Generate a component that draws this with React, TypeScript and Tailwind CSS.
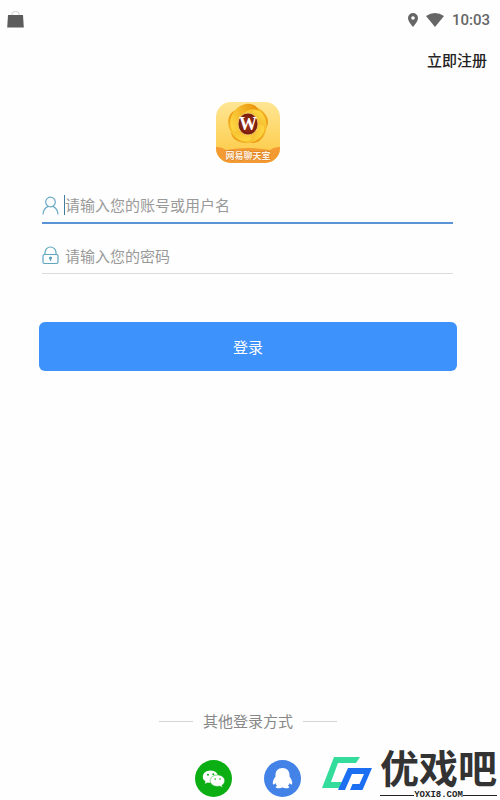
import { useState } from "react";
import type { ReactNode } from "react";

type FieldProps = {
  id: string;
  type: string;
  placeholder: string;
  icon: ReactNode;
  active?: boolean;
};

function Field({ id, type, placeholder, icon, active }: FieldProps) {
  const [value, setValue] = useState("");

  return (
    <div
      className={
        active
          ? "flex h-9 items-center border-b-2 border-[#5a93d6]"
          : "flex h-9 items-center border-b border-[#dcdcdc]"
      }
    >
      <label htmlFor={id} aria-label={placeholder} className="w-[22px] shrink-0">
        {icon}
      </label>
      <span className={active ? "h-5 w-px shrink-0 bg-[#3f7f9f]" : "h-5 w-px shrink-0"} />
      <input
        id={id}
        type={type}
        value={value}
        placeholder={placeholder}
        onChange={(e) => setValue(e.target.value)}
        className="min-w-0 flex-1 bg-transparent text-[15px] leading-5 text-[#333] outline-none placeholder:text-[#999]"
      />
    </div>
  );
}

function StatusBar() {
  return (
    <div className="flex h-10 items-center justify-between pr-[10px] pl-[7px]">
      <svg width="17" height="18" viewBox="0 0 17 18">
        <path d="M5 4V2.500a3.500 2 0 0 1 7 0V4" fill="none" stroke="#cfcfcf" />
        <path d="M1 4h15l.8 12.500H.2z" fill="#5c5c5c" />
      </svg>
      <div className="flex items-center text-[#666]">
        <svg width="10" height="14" viewBox="0 0 10 14" className="mr-2">
          <path
            fillRule="evenodd"
            fill="currentColor"
            d="M5 0a5 5 0 0 0-5 5c0 3.600 5 9 5 9s5-5.400 5-9a5 5 0 0 0-5-5zm0 3.200a1.800 1.800 0 1 1 0 3.600 1.800 1.800 0 0 1 0-3.600z"
          />
        </svg>
        <svg width="18" height="14" viewBox="0 0 18 14" className="mr-2">
          <path d="M0 3Q9-3 18 3L9 14z" fill="currentColor" />
        </svg>
        <span className="font-[Roboto,sans-serif] text-[15px] leading-5 font-medium">10:03</span>
      </div>
    </div>
  );
}

function AppLogo() {
  return (
    <svg width="64" height="61" viewBox="0 0 64 61" role="img" aria-label="网易聊天室">
      <defs>
        <linearGradient id="tile" x1="0" y1="0" x2="0" y2="1">
          <stop offset="0" stopColor="#ffe694" />
          <stop offset="1" stopColor="#fcc83e" />
        </linearGradient>
        <linearGradient id="petal" x1="0" y1="0" x2="1" y2="1">
          <stop offset="0" stopColor="#ffe04a" />
          <stop offset="1" stopColor="#e98c06" />
        </linearGradient>
        <radialGradient id="ball">
          <stop offset="0" stopColor="#a8381a" />
          <stop offset="1" stopColor="#741a0c" />
        </radialGradient>
        <clipPath id="tileClip">
          <rect width="64" height="61" rx="15" />
        </clipPath>
      </defs>
      <g clipPath="url(#tileClip)">
        <rect width="64" height="61" fill="url(#tile)" />
        <circle cx="32" cy="22" r="16" fill="#f6ad1c" />
        {[0, 72, 144, 216, 288].map((angle) => (
          <path
            key={angle}
            transform={`rotate(${angle} 32 22)`}
            d="M22 8C31 0 46 4 51 15c2 5 1 10-3 13 1-7-3-12-9-14-5-2-10-1-14 1-4 0-6-4-3-7z"
            fill="url(#petal)"
          />
        ))}
        <ellipse cx="32" cy="22" rx="10" ry="11" fill="url(#ball)" stroke="#f9d777" strokeWidth=".8" />
        <text
          x="32"
          y="28"
          textAnchor="middle"
          fontFamily="Liberation Serif, serif"
          fontWeight="700"
          fontSize="18"
          fill="#fff"
        >
          W
        </text>
        <path d="M0 45q6 0 10 3 22-4 44 0 4-3 10-3v16H0z" fill="#f39a32" />
        <text
          x="32"
          y="57"
          textAnchor="middle"
          fontFamily="Noto Sans CJK SC, sans-serif"
          fontWeight="700"
          fontSize="9"
          fill="#fff4e2"
          stroke="#d97a20"
          strokeWidth=".8"
          paintOrder="stroke"
        >
          网易聊天室
        </text>
      </g>
    </svg>
  );
}

function UserIcon() {
  return (
    <svg width="17" height="19" viewBox="0 0 17 19" fill="none" stroke="#68a9c6" strokeWidth="1.200">
      <circle cx="8.500" cy="6" r="4.800" />
      <path d="M1 18c.4-3.800 2.500-6.300 5-7.600M16 18c-.4-3.800-2.500-6.300-5-7.600" strokeLinecap="round" />
    </svg>
  );
}

function LockIcon() {
  return (
    <svg width="17" height="19" viewBox="0 0 17 19" fill="none" stroke="#5fa5bd" strokeWidth="1.200">
      <rect x="1" y="8.500" width="15" height="9" rx="1.500" />
      <path d="M3 8.500V6.500a5.500 5.500 0 0 1 11 0v2" />
      <circle cx="8.500" cy="12" r="1" fill="#5fa5bd" />
      <path d="M8.500 12v3" />
    </svg>
  );
}

function WechatIcon() {
  return (
    <svg width="37" height="37" viewBox="0 0 37 37">
      <circle cx="18.500" cy="18.500" r="18.500" fill="#0caf13" />
      <path
        d="M15.500 10.500c-4.400 0-7.700 2.800-7.700 6.200 0 2 1 3.700 2.800 4.800l-.8 2.300 2.900-1.400c.9.200 1.800.4 2.800.4 4.300 0 7.700-2.700 7.700-6.100s-3.400-6.200-7.700-6.200z"
        fill="#fff"
      />
      <path
        d="M22.500 15c-4.200 0-7.300 2.500-7.300 5.700s3.100 5.700 7.300 5.700c.8 0 1.600-.1 2.300-.3l2.800 1.500-.7-2.400c1.700-1 2.800-2.600 2.800-4.500 0-3.200-3.200-5.700-7.200-5.700z"
        fill="#fff"
        stroke="#0caf13"
        strokeWidth=".5"
      />
      <g fill="#0caf13">
        <circle cx="13" cy="14.800" r="1" />
        <circle cx="18.300" cy="14.300" r="1" />
        <circle cx="20.200" cy="19" r=".8" />
        <circle cx="25" cy="19" r=".8" />
      </g>
    </svg>
  );
}

function QQIcon() {
  return (
    <svg width="37" height="37" viewBox="0 0 37 37">
      <circle cx="18.500" cy="18.500" r="18.500" fill="#4382e6" />
      <path
        d="M18.500 8c-4.600 0-7 3-7 6.800v1.800c-1.700 2.200-2.900 4.800-2.700 7 .1 1.600 1.300 1.200 2.500-.7.300 1.100.9 2.100 1.800 2.900-1 .5-1.500 1.100-1.300 1.700.5 1.200 5.300 1 6.700-.2 1.400 1.200 6.200 1.400 6.700.2.200-.6-.3-1.200-1.300-1.700.9-.8 1.500-1.800 1.800-2.900 1.200 1.900 2.400 2.300 2.500.7.200-2.200-1-4.800-2.700-7v-1.800C25.500 11 23.100 8 18.500 8z"
        fill="#fff"
      />
    </svg>
  );
}

function SiteMark() {
  return (
    <div className="absolute right-[3px] bottom-0 flex items-end gap-2">
      <svg width="50" height="34" viewBox="0 0 50 34" className="mb-[9px]">
        <path d="M12 0h26l-4 6H16L9 25h12l-2.500 6H0z" fill="#34dc9c" />
        <path d="M26 11h24l-9.500 22H28l2.500-6h7l4.500-10H30l-7 16h-7z" fill="#1d6ff2" />
      </svg>
      <div>
        <div className="font-['Liberation_Sans','Noto_Sans_CJK_SC',sans-serif] text-[39px] leading-10 font-bold text-[#333]">
          优戏吧
        </div>
        <div className="flex items-center font-['Liberation_Mono',monospace] text-[9px] leading-[10px] font-bold text-[#222]">
          <span className="h-px flex-1 bg-[#222]" />
          YOXI8.COM
          <span className="h-px flex-1 bg-[#222]" />
        </div>
      </div>
    </div>
  );
}

export default function App() {
  return (
    <div className="relative flex min-h-screen flex-col bg-[#fefefe] font-['Noto_Sans_CJK_SC',sans-serif]">
      <StatusBar />
      <header className="flex h-10 items-center justify-end pr-[13px]">
        <a href="#register" className="text-[15px] leading-5 font-medium text-[#222]">
          立即注册
        </a>
      </header>

      <form className="flex flex-col pt-[22px] pr-[43px] pl-[39px]" onSubmit={(e) => e.preventDefault()}>
        <div className="flex justify-center">
          <AppLogo />
        </div>
        <div className="mt-[25px] mr-1 ml-[3px] flex flex-col gap-[14px]">
          <Field id="account" type="text" placeholder="请输入您的账号或用户名" icon={<UserIcon />} active />
          <Field id="password" type="password" placeholder="请输入您的密码" icon={<LockIcon />} />
        </div>
        <button type="submit" className="mt-12 h-[49px] rounded-md bg-[#3d92fb] text-[15px] leading-5 text-white">
          登录
        </button>
      </form>

      <footer className="mt-auto pr-1 pb-[3px]">
        <div className="flex items-center justify-center gap-[10px] text-[15px] leading-5 text-[#888]">
          <span className="h-px w-[34px] bg-[#d4d4d4]" />
          其他登录方式
          <span className="h-px w-[34px] bg-[#d4d4d4]" />
        </div>
        <div className="mt-[29px] flex justify-center gap-8">
          <button type="button" aria-label="微信登录">
            <WechatIcon />
          </button>
          <button type="button" aria-label="QQ登录">
            <QQIcon />
          </button>
        </div>
      </footer>

      <SiteMark />
    </div>
  );
}
